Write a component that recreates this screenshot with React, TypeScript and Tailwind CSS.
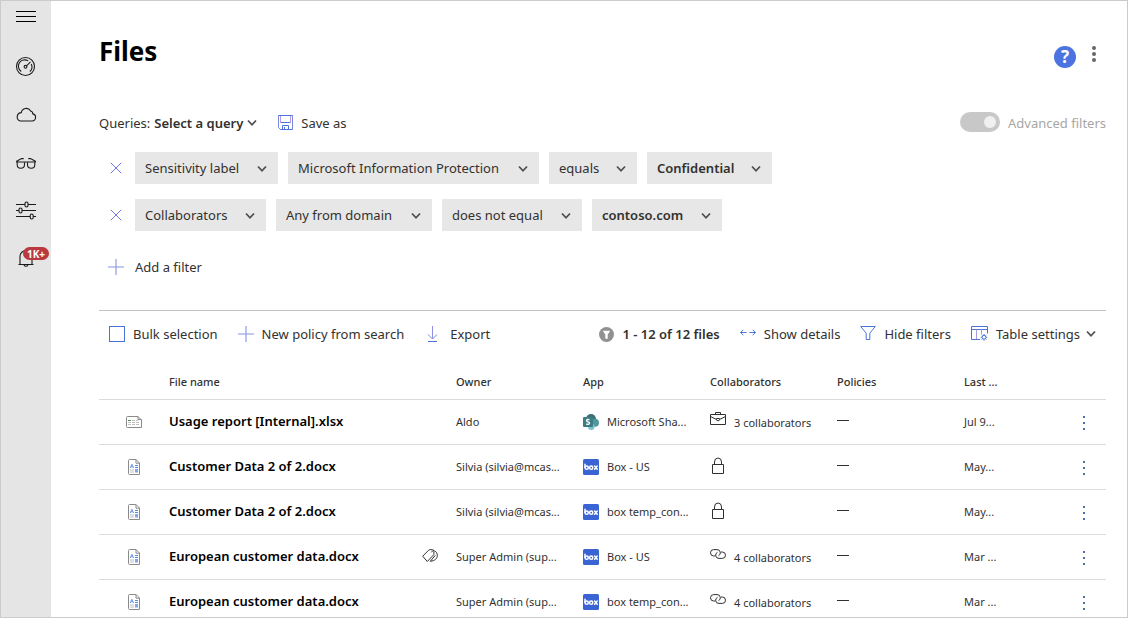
import type { ReactNode } from "react";

const blue = "#4a74dc";

function Chevron({ className = "" }: { className?: string }) {
  return (
    <svg className={className} width="10" height="8" viewBox="0 0 10 8" fill="none" stroke="#505050" strokeWidth="1.8" aria-hidden="true">
      <path d="M1 1.5 5 5.8 9 1.5" />
    </svg>
  );
}

function PlusIcon() {
  return (
    <svg width="16" height="16" viewBox="0 0 16 16" fill="none" aria-hidden="true">
      <path d="M0 8H16" stroke="#9aa6e6" strokeWidth="1.2" />
      <path d="M8 0V16" stroke="#8f9ae6" strokeWidth="1.2" />
    </svg>
  );
}

function NavIcon({ label, children }: { label: string; children: ReactNode }) {
  return (
    <a href="#" aria-label={label} className="relative flex h-12 w-full items-center justify-center">
      <svg width="22" height="22" viewBox="0 0 22 22" fill="none" stroke="#1b1b1b" strokeWidth="1.1" aria-hidden="true">
        {children}
      </svg>
    </a>
  );
}

function Sidebar() {
  return (
    <nav className="flex w-[50px] shrink-0 flex-col items-center bg-[#e5e5e5]">
      <button type="button" aria-label="Toggle navigation" className="flex h-[30px] w-full items-center justify-center">
        <svg width="20" height="12" viewBox="0 0 20 12" stroke="#000" strokeWidth="1" aria-hidden="true">
          <path d="M0 1.5H20M0 6.5H20M0 11.5H20" />
        </svg>
      </button>
      <div className="mt-3 w-full">
        <NavIcon label="Dashboard">
          <circle cx="10.5" cy="10.5" r="9" />
          <path d="M6.2 15.5A6.3 6.3 0 0 1 13.2 4.9M16.2 7.9A6.3 6.3 0 0 1 14.8 15.5" />
          <circle cx="10.5" cy="10.8" r="1.4" />
          <path d="M11.5 9.8 15.5 5.8" />
        </NavIcon>
        <NavIcon label="Discover">
          <path d="M5.2 17H17a3.6 3.6 0 0 0 .8-7.1A2.9 2.9 0 0 0 15.6 7 5 5 0 0 0 6.300 8.600 4.300 4.300 0 0 0 5.200 17Z" />
        </NavIcon>
        <NavIcon label="Investigate">
          <path d="M1 10H21M1.2 9.5 6.5 6.6H8.700M20.800 9.500 15.500 6.600H13.300" />
          <path d="M2.200 10.200v2.200c0 2 1.400 3.800 3.500 3.800s3.800-1.600 3.800-3.800v-2.200M19.800 10.200v2.200c0 2-1.400 3.800-3.500 3.800s-3.800-1.600-3.800-3.800v-2.200" />
        </NavIcon>
        <NavIcon label="Control">
          <path d="M1 4.500H10M13 4.500H21M1 10.500H4M7 10.500H21M1 16.500H15.200M18.200 16.500H21" />
          <rect x="10" y="2" width="3" height="5" rx="1.500" />
          <rect x="4" y="8" width="3" height="5" rx="1.500" />
          <rect x="15.200" y="14" width="3" height="5" rx="1.500" />
        </NavIcon>
        <div className="relative">
          <NavIcon label="Alerts">
            <path d="M5 16.500V8.500a6 6 0 0 1 12 0V16.500M3.500 16.500H18.500M9 17a2.200 2.200 0 0 0 4 0" />
          </NavIcon>
          <span className="absolute top-3 right-0.5 flex h-[13px] w-[26px] items-center justify-center rounded-full bg-[#b9393f] text-[10px] leading-none font-bold text-white">
            1K+
          </span>
        </div>
      </div>
    </nav>
  );
}

type Choice = { name: string; value: string; width: string; strong?: boolean };

const filterRows: Choice[][] = [
  [
    { name: "Filter", value: "Sensitivity label", width: "w-[143px]" },
    { name: "Source", value: "Microsoft Information Protection", width: "w-[251px]" },
    { name: "Operator", value: "equals", width: "w-[88px]" },
    { name: "Value", value: "Confidential", width: "w-[125px]", strong: true },
  ],
  [
    { name: "Filter", value: "Collaborators", width: "w-[131px]" },
    { name: "Source", value: "Any from domain", width: "w-[156px]" },
    { name: "Operator", value: "does not equal", width: "w-[140px]" },
    { name: "Value", value: "contoso.com", width: "w-[130px]", strong: true },
  ],
];

function FilterSelect({ name, value, width, strong }: Choice) {
  return (
    <div className={`grid ${width} items-center bg-[#e7e7e7]`}>
      <select
        aria-label={name}
        className={`col-start-1 row-start-1 h-8 w-full appearance-none bg-transparent pr-7 pl-2.5 ${strong ? "font-semibold" : ""}`}
      >
        <option>{value}</option>
      </select>
      <Chevron className="pointer-events-none col-start-1 row-start-1 mt-0.5 mr-[11px] justify-self-end" />
    </div>
  );
}

function Filters() {
  return (
    <div className="mt-[13px] flex flex-col gap-[15px]">
      {filterRows.map((row, i) => (
        <div key={i} className="flex gap-2.5">
          <button type="button" aria-label="Remove filter" className="flex w-[26px] items-center justify-end pr-[3px]">
            <svg width="12" height="12" viewBox="0 0 12 12" stroke="#7478dc" strokeWidth="1" aria-hidden="true">
              <path d="M.8.8 11.2 11.2M11.2.8.8 11.2" />
            </svg>
          </button>
          {row.map((c) => (
            <FilterSelect key={c.name} {...c} />
          ))}
        </div>
      ))}
    </div>
  );
}

function Toolbar() {
  return (
    <div className="mt-[27px] flex h-[47px] items-center justify-between border-t border-[#c2c2c2] px-2.5 whitespace-nowrap">
      <div className="flex items-center gap-5">
        <label className="flex items-center gap-2">
          <input type="checkbox" className="size-4 appearance-none border border-[#4a74dc] bg-white" />
          Bulk selection
        </label>
        <button type="button" className="flex items-center gap-2">
          <PlusIcon />
          New policy from search
        </button>
        <button type="button" className="flex items-center gap-2.5">
          <svg width="16" height="16" viewBox="0 0 16 16" fill="none" stroke={blue} aria-hidden="true">
            <path d="M8.5 0V12.5" stroke="#8f8fe0" />
            <path d="M4 8.500 8.500 13 13 8.500" stroke="#7a8be0" />
            <path d="M4 15.500H13" />
          </svg>
          Export
        </button>
      </div>
      <div className="flex items-center gap-5">
        <span className="flex items-center gap-2 font-semibold">
          <svg width="15" height="15" viewBox="0 0 15 15" aria-hidden="true">
            <circle cx="7.5" cy="7.5" r="7.5" fill="#919191" />
            <path d="M3.8 3.8H11.2L8.7 7.4V11.8H6.3V7.4Z" fill="#fff" />
          </svg>
          1 - 12 of 12 files
        </span>
        <button type="button" className="flex items-center gap-2">
          <svg width="16" height="16" viewBox="0 0 16 16" fill="none" stroke={blue} aria-hidden="true">
            <path d="M0.5 6.5H6.5M9.5 6.5H15.5M3.3 3.8.6 6.5 3.3 9.2M12.7 3.8 15.4 6.5 12.7 9.2" />
          </svg>
          Show details
        </button>
        <button type="button" className="flex items-center gap-2">
          <svg width="16" height="16" viewBox="0 0 16 16" fill="none" stroke={blue} aria-hidden="true">
            <path d="M0.7 .5H15.3L9.8 7.2V13.5H6.2V7.2Z" />
          </svg>
          Hide filters
        </button>
        <button type="button" className="flex items-center gap-2">
          <svg width="17" height="16" viewBox="0 0 17 16" fill="none" stroke={blue} aria-hidden="true">
            <path d="M9 13.5H.5V.5H16.5V7.5M.5 3.5H16.5" />
            <path d="M5.5 3.5V13M10.5 3.5V8.5" stroke="#a79be0" />
            <circle cx="13" cy="11.3" r="1.9" />
            <path d="M13 8V9.4M13 13.2V14.6M9.8 11.3H11M15 11.3H16.3M10.7 9 11.6 9.9M14.4 12.7 15.3 13.6M15.3 9 14.4 9.9M11.6 12.7 10.7 13.6" />
          </svg>
          <span className="flex items-center gap-1.5">
            Table settings
            <Chevron />
          </span>
        </button>
      </div>
    </div>
  );
}

function SheetIcon() {
  return (
    <svg className="mx-auto" width="16" height="12" viewBox="0 0 16 12" fill="none" stroke="#8a8a8a" aria-hidden="true">
      <path d="M1.5.5H12L15.5 4V11.5H1.5A1 1 0 0 1 .5 10.5V1.5A1 1 0 0 1 1.5.5ZM12 .5V3.5H15.5" />
      <path d="M2 4.5H5" stroke="#4e8a58" />
      <path d="M6 4.5H9M10 4.5H12.5M2 6.5H5M6 6.5H9M10 6.5H13M2 8.5H5M6 8.5H9M10 8.5H13" stroke="#c0c0c0" />
    </svg>
  );
}

function DocIcon() {
  return (
    <svg className="mx-auto" width="12" height="16" viewBox="0 0 12 16" fill="none" stroke="#8a8a8a" aria-hidden="true">
      <path d="M1.5.5H8L11.5 4V15.5H1.5A1 1 0 0 1 .5 14.5V1.5A1 1 0 0 1 1.5.5ZM8 .5V4.2H11.5" />
      <path d="M2.2 9 3.9 5.2 5.6 9M2.8 7.8H5" stroke="#6f9be8" />
      <path d="M7 6.5H10M7 8.5H10" stroke="#5b86dc" />
      <path d="M2 11H6M2 13H6" stroke="#c0c0c0" />
      <rect x="7" y="10" width="3" height="3.5" fill="#7ea6ee" stroke="none" />
    </svg>
  );
}

function TagIcon() {
  return (
    <svg className="shrink-0" width="16" height="14" viewBox="0 0 16 14" fill="none" stroke="#303030" aria-label="Labeled">
      <path d="M.7 7.200 6.500 1.300Q7 .7 7.800.7H10.300Q11.900.7 11.900 2.300V4.800Q11.900 5.600 11.300 6.200L5.300 12.500Z" />
      <path d="M12.500 1.900C14.600 2.700 15.400 4.600 15.300 6.700 15.200 9.500 13 11.800 8.300 12.300M8.300 12.300 13.300 6.300M9.300 3.300 11.300 1.300" />
    </svg>
  );
}

function SharePointLogo() {
  return (
    <svg width="16" height="16" viewBox="0 0 16 16" aria-hidden="true">
      <circle cx="8" cy="5" r="5" fill="#3b6f75" />
      <circle cx="12" cy="8.7" r="4" fill="#4f979c" />
      <circle cx="8.3" cy="12.7" r="3.3" fill="#78c4cf" />
      <rect x="0" y="3" width="10" height="10" rx="1" fill="#3a7d83" />
      <path d="M6.5 5.9C5.200 5.100 3.500 5.400 3.500 6.700s3 1 3 2.400-1.800 1.700-3.200.8" fill="none" stroke="#fff" strokeWidth="1.4" />
    </svg>
  );
}

function BoxLogo() {
  return (
    <svg width="16" height="16" viewBox="0 0 16 16" fill="none" aria-hidden="true">
      <rect width="16" height="16" rx="1.5" fill="#3a63d4" />
      <g stroke="#fff" strokeWidth="1.500" strokeLinecap="round">
        <path d="M2 5.300V8.500M11.600 7 14.200 10.300M14.200 7 11.600 10.300" />
        <circle cx="3.700" cy="8.700" r="1.600" />
        <circle cx="8.200" cy="8.700" r="1.600" />
      </g>
    </svg>
  );
}

function BriefcaseIcon() {
  return (
    <svg width="16" height="16" viewBox="0 0 16 16" fill="none" stroke="#303030" aria-hidden="true">
      <path d="M.5 3.500H15.500V13.500H.5ZM5.500 3.500V1.500H10.500V3.500M.5 5.500 6.500 8.500M15.500 5.500 9.500 8.500" />
      <path d="M6.500 7.500H9.500V8.500A1.500 1.300 0 0 1 6.500 8.500Z" />
    </svg>
  );
}

function LockIcon() {
  return (
    <svg width="16" height="20" viewBox="0 0 16 20" fill="none" stroke="#303030" aria-label="Private">
      <path d="M2.500 7.500H13.500V16.500H2.500ZM4.500 7.500V5a3.500 4 0 0 1 7 0V7.500" />
    </svg>
  );
}

function LinkIcon() {
  return (
    <svg width="16" height="16" viewBox="0 0 16 16" fill="none" stroke="#303030" aria-hidden="true">
      <path d="M5.200 10H3.700A3.200 3.200 0 0 1 3.700 3.600H7A3.200 3.200 0 0 1 8.500 9.700" />
      <path d="M11 6H12.300A3.200 3.200 0 0 1 12.300 12.400H9A3.200 3.200 0 0 1 7.500 6.300" />
    </svg>
  );
}

type FileRow = {
  name: string;
  kind: "sheet" | "doc";
  tagged?: boolean;
  owner: string;
  app: string;
  logo: "sharepoint" | "box";
  access: "team" | "private" | "link";
  count?: number;
  modified: string;
};

const files: FileRow[] = [
  { name: "Usage report [Internal].xlsx", kind: "sheet", owner: "Aldo", app: "Microsoft Sha...", logo: "sharepoint", access: "team", count: 3, modified: "Jul 9..." },
  { name: "Customer Data 2 of 2.docx", kind: "doc", owner: "Silvia (silvia@mcas...", app: "Box - US", logo: "box", access: "private", modified: "May..." },
  { name: "Customer Data 2 of 2.docx", kind: "doc", owner: "Silvia (silvia@mcas...", app: "box temp_con...", logo: "box", access: "private", modified: "May..." },
  { name: "European customer data.docx", kind: "doc", tagged: true, owner: "Super Admin (sup...", app: "Box - US", logo: "box", access: "link", count: 4, modified: "Mar ..." },
  { name: "European customer data.docx", kind: "doc", owner: "Super Admin (sup...", app: "box temp_con...", logo: "box", access: "link", count: 4, modified: "Mar ..." },
];

function FilesTable() {
  return (
    <table className="mt-[7px] w-full table-fixed border-separate border-spacing-0 text-left text-[11px] whitespace-nowrap">
      <thead>
        <tr className="h-9 [&>th]:border-b [&>th]:border-[#dcdcdc] [&>th]:font-medium">
          <th className="w-[70px]" aria-label="Type" />
          <th>File name</th>
          <th className="w-[127px]">Owner</th>
          <th className="w-[127px]">App</th>
          <th className="w-[127px]">Collaborators</th>
          <th className="w-[127px]">Policies</th>
          <th className="w-[98px]">Last ...</th>
          <th className="w-11" aria-label="Actions" />
        </tr>
      </thead>
      <tbody>
        {files.map((f, i) => (
          <tr key={i} className="h-[45px] [&>td]:border-b [&>td]:border-[#dcdcdc]">
            <td>{f.kind === "sheet" ? <SheetIcon /> : <DocIcon />}</td>
            <td className="pr-[18px] pb-0.5">
              <div className="flex items-center justify-between">
                <a href="#" className="text-[13px] font-semibold text-black">
                  {f.name}
                </a>
                {f.tagged && <TagIcon />}
              </div>
            </td>
            <td>{f.owner}</td>
            <td>
              <span className="flex items-center gap-2">
                {f.logo === "sharepoint" ? <SharePointLogo /> : <BoxLogo />}
                {f.app}
              </span>
            </td>
            <td>
              <span className="flex items-start gap-2">
                {f.access === "team" && <BriefcaseIcon />}
                {f.access === "private" && <LockIcon />}
                {f.access === "link" && <LinkIcon />}
                {f.count && <span className="pt-0.5">{f.count} collaborators</span>}
              </span>
            </td>
            <td>
              <div className="mb-[3px] h-px w-3 bg-[#303030]" />
            </td>
            <td>{f.modified}</td>
            <td>
              <button type="button" aria-label={`Actions for ${f.name}`} className="mx-auto flex h-6 w-6 items-center justify-center pt-0.5">
                <svg width="2" height="14" viewBox="0 0 2 14" fill="#4f6fa8" aria-hidden="true">
                  <path d="M0 0H2V2H0ZM0 6H2V8H0ZM0 12H2V14H0Z" />
                </svg>
              </button>
            </td>
          </tr>
        ))}
      </tbody>
    </table>
  );
}

export default function App() {
  return (
    <div className="flex h-screen overflow-hidden border border-[#cbcbcb] bg-white font-['Noto_Sans','Open_Sans',sans-serif] text-[13px] leading-5 text-[#323130]">
      <Sidebar />
      <main className="min-w-0 flex-1 pt-8 pr-[21px] pl-12">
        <header className="flex items-start justify-between">
          <h1 className="text-[26px] leading-9 font-bold text-black">Files</h1>
          <div className="flex items-start gap-1.5 pt-3">
            <button type="button" aria-label="Help" className="mt-px flex size-[22px] items-center justify-center rounded-full bg-[#4b74e0] text-[17px] font-bold text-white">
              ?
            </button>
            <button type="button" aria-label="More options" className="mt-px flex h-4 w-6 items-center justify-center">
              <svg width="6" height="16" viewBox="0 0 6 16" fill="#666" aria-hidden="true">
                <circle cx="3" cy="2" r="2" />
                <circle cx="3" cy="8" r="2" />
                <circle cx="3" cy="14" r="2" />
              </svg>
            </button>
          </div>
        </header>

        <div className="mt-[38px] flex h-8 items-center justify-between">
          <div className="flex items-center">
            <span>Queries:</span>
            <button type="button" className="ml-1 flex items-center gap-1 font-semibold">
              Select a query
              <Chevron />
            </button>
            <button type="button" className="ml-5 flex items-center gap-2">
              <svg width="16" height="16" viewBox="0 0 16 16" fill="none" stroke={blue} aria-hidden="true">
                <path d="M1.500.5H15.500V14.500H3.500L1.500 12.500Z" stroke="#7c88e0" />
                <path d="M1.500.5H15.500M3.500 14.500H15.500M3.500 7.500H13.500M5.500 14.500V10.500H11.500V14.500M7.500 12V14.500" />
                <path d="M3.500 1V7.500M13.500 1V7.500" stroke="#b59be0" />
              </svg>
              Save as
            </button>
          </div>
          <label className="flex items-start gap-2 text-[#a6a6a6]">
            <input
              type="checkbox"
              role="switch"
              defaultChecked
              disabled
              className="-mt-px flex h-5 w-10 appearance-none items-center justify-end rounded-full bg-[#c8c8c8] pr-1 before:size-3 before:rounded-full before:bg-[#f0f0f0] before:content-['']"
            />
            Advanced filters
          </label>
        </div>

        <Filters />

        <button type="button" className="mt-5 ml-[9px] flex h-8 items-center gap-[11px]">
          <PlusIcon />
          Add a filter
        </button>

        <Toolbar />
        <FilesTable />
      </main>
    </div>
  );
}
